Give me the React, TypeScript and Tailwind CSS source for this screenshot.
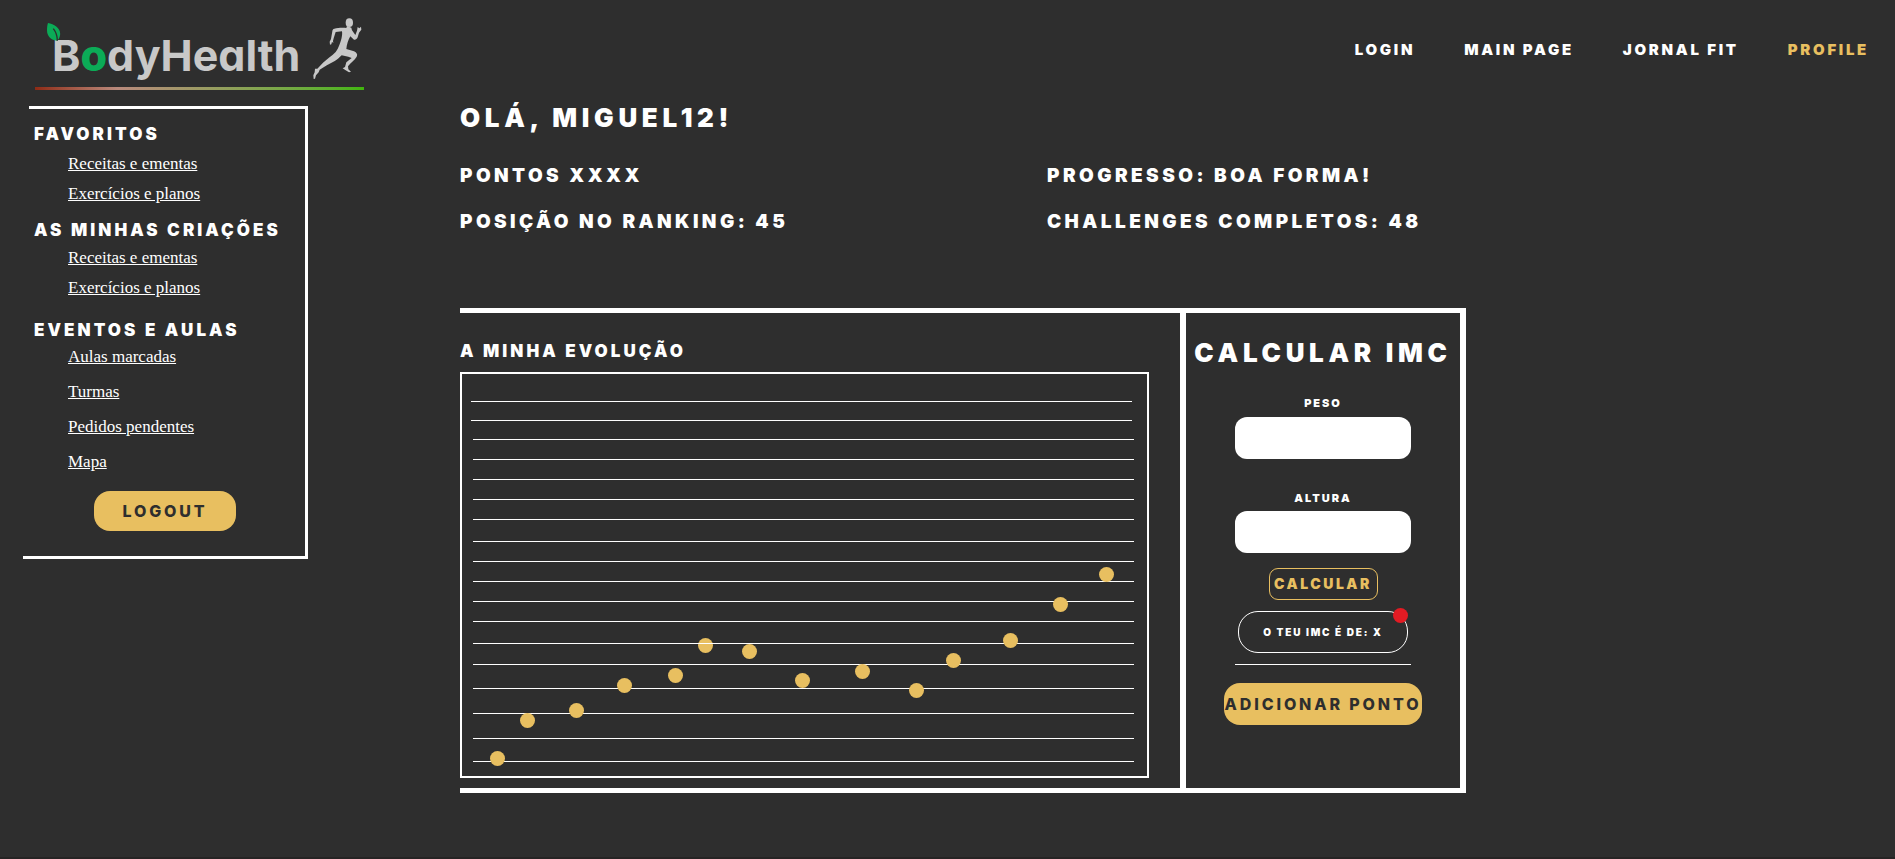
import React from "react";

const navLinks = [
  { label: "LOGIN", active: false },
  { label: "MAIN PAGE", active: false },
  { label: "JORNAL FIT", active: false },
  { label: "PROFILE", active: true },
];

const gridLines = [29, 48, 67, 87, 107, 127, 147, 169, 189, 209, 229, 249, 271, 292, 316, 341, 366, 389];

const points = [
  [37.5, 386.5],
  [67.5, 348.5],
  [116.5, 338.5],
  [164.5, 313.5],
  [215.5, 303.5],
  [245.5, 273.5],
  [289.5, 279.5],
  [342.5, 308.5],
  [402.5, 299.5],
  [456.5, 318.5],
  [493.5, 288.5],
  [550.5, 268.5],
  [600.5, 232.5],
  [646.5, 202.5],
];

function Logo() {
  return (
    <a href="#" aria-label="BodyHealth" className="relative block h-[106px] w-[364px] shrink-0 pl-[35px] pt-4">
      <svg className="absolute left-[46px] top-[22px]" width="15" height="20" viewBox="0 0 45 60" aria-hidden="true">
        <path d="M6 3C25 6 46 20 42 40C41 48 37 54 33 56C15 55 3 43 3 25C3 16 4 8 6 3Z" fill="#0bab57" />
        <path d="M22 20C29 29 34 40 34 56" stroke="#2e2e2e" strokeWidth="4" fill="none" />
      </svg>
      <span className="flex h-[71px] items-start justify-between pr-0.5">
        <span className="block pl-[17px] pt-[13px] text-[43px] font-bold leading-[52px] text-[#c8c8c8] [font-feature-settings:'cv11']">
          B<span className="font-extrabold text-[#0bab57]">o</span>dyHealth
        </span>
        <svg className="shrink-0" width="50" height="64" viewBox="0 0 150 190" fill="#c8c8c8" aria-hidden="true">
          <ellipse cx="112" cy="19" rx="11" ry="13" />
          <path d="M105 29L103 35C94 34 78 34 67 37C63 38 61 41 61 45L57 68L53 76L54 85L58 84L60 76L64 81L63 74L65 66L71 47L90 45C92 57 87 75 82 86C79 95 75 102 71 107C59 119 44 129 33 139L16 157L9 157L8 168L4 177L5 188L9 187L12 177L20 168L23 160C37 152 52 142 67 135C75 131 83 123 89 117L109 121L119 125L103 138L99 152L92 156L101 162L111 168L117 166L109 159L108 150C116 139 128 131 134 121C138 115 134 109 126 105L103 98C104 86 109 70 115 60L126 70C130 72 135 68 137 63L141 49L148 40L147 31L142 36L137 32L135 43L130 56L120 42L118 34Z" />
        </svg>
      </span>
      <span className="block h-[3px] bg-linear-to-r from-[#8e2a14] via-[#b98a7c] via-25% to-[#3fb50a]" />
    </a>
  );
}

function SideSection({ title, links, className, listClass }: { title: string; links: string[]; className: string; listClass: string }) {
  return (
    <section className={className}>
      <h2 className="whitespace-nowrap text-[17px] font-black leading-6 tracking-[0.18em]">{title}</h2>
      <ul className={listClass}>
        {links.map((l) => (
          <li key={l}>
            <a href="#" className="underline">
              {l}
            </a>
          </li>
        ))}
      </ul>
    </section>
  );
}

function Sidebar() {
  return (
    <aside className="ml-[23px] w-[285px] shrink-0 self-start border-b-[3px] border-r-[3px] border-white">
      <div className="ml-1.5 h-[3px] bg-white" />
      <div className="flex flex-col pl-[11px] pt-[13px]">
        <SideSection
          title="FAVORITOS"
          links={["Receitas e ementas", "Exercícios e planos"]}
          className=""
          listClass="mt-1.5 flex flex-col gap-1.5 pl-[34px] font-['Liberation_Serif',serif] text-[17px] leading-6"
        />
        <SideSection
          title="AS MINHAS CRIAÇÕES"
          links={["Receitas e ementas", "Exercícios e planos"]}
          className="mt-3"
          listClass="mt-1 flex flex-col gap-1.5 pl-[34px] font-['Liberation_Serif',serif] text-[17px] leading-6"
        />
        <SideSection
          title="EVENTOS E AULAS"
          links={["Aulas marcadas", "Turmas", "Pedidos pendentes", "Mapa"]}
          className="mt-[18px]"
          listClass="mt-[3px] flex flex-col gap-[11px] pl-[34px] font-['Liberation_Serif',serif] text-[17px] leading-6"
        />
        <button
          type="button"
          className="mb-[25px] ml-[60px] mt-[17px] h-10 w-[142px] rounded-2xl bg-[#e8bf60] text-base font-extrabold tracking-[0.18em] text-[#2e2e2e]"
        >
          LOGOUT
        </button>
      </div>
    </aside>
  );
}

function Chart() {
  return (
    <svg viewBox="0 0 689 406" className="block h-auto w-full" role="img" aria-label="A minha evolução">
      <rect x="1" y="1" width="687" height="404" fill="none" stroke="#fff" strokeWidth="2" />
      {gridLines.map((y, i) => (
        <rect key={y} x={i < 2 ? 11 : 13} y={y} width="661" height="1" fill="#fff" />
      ))}
      {points.map(([x, y]) => (
        <circle key={x} cx={x} cy={y} r="7.5" fill="#e8bf60" />
      ))}
      <rect x="237" y="271" width="17" height="1" fill="#fff" />
    </svg>
  );
}

function ImcForm() {
  return (
    <form className="flex w-[286px] shrink-0 flex-col items-center border-x-[6px] border-white" onSubmit={(e) => e.preventDefault()}>
      <h2 className="mt-6 whitespace-nowrap text-[26px] font-black leading-8 tracking-[0.18em]">CALCULAR IMC</h2>
      <label htmlFor="peso" className="mt-[26px] text-[11px] font-black leading-4 tracking-[0.18em]">
        PESO
      </label>
      <input id="peso" type="text" className="mt-1.5 h-[42px] w-44 rounded-xl bg-white px-3 text-base text-[#2e2e2e]" />
      <label htmlFor="altura" className="mt-[31px] text-[11px] font-black leading-4 tracking-[0.18em]">
        ALTURA
      </label>
      <input id="altura" type="text" className="mt-[5px] h-[42px] w-44 rounded-xl bg-white px-3 text-base text-[#2e2e2e]" />
      <button
        type="submit"
        className="mt-[15px] h-8 w-[109px] rounded-[9px] border border-[#e8bf60] text-sm font-black tracking-[0.18em] text-[#e8bf60]"
      >
        CALCULAR
      </button>
      <div className="relative mt-[11px] flex h-[42px] w-[170px] items-center justify-center rounded-[20px] border border-white">
        <output htmlFor="peso altura" className="whitespace-nowrap text-[10px] font-black tracking-[0.18em]">
          O TEU IMC É DE: X
        </output>
        <span className="absolute -right-px -top-1 size-[15px] rounded-full bg-[#e31b23]" />
      </div>
      <hr className="mt-[11px] w-44 border-t border-white" />
      <button
        type="button"
        className="mt-[18px] h-[42px] w-[198px] whitespace-nowrap rounded-2xl bg-[#e8bf60] text-base font-extrabold tracking-[0.18em] text-[#2e2e2e]"
      >
        ADICIONAR PONTO
      </button>
    </form>
  );
}

export default function App() {
  return (
    <div className="flex min-h-screen flex-col border-b-2 border-[#262424] bg-[#2e2e2e] font-['Inter',sans-serif] text-white">
      <header className="flex items-start justify-between">
        <Logo />
        <nav className="flex gap-[49px] pr-[26px] pt-[38px]">
          {navLinks.map((l) => (
            <a
              key={l.label}
              href="#"
              className={
                l.active
                  ? "whitespace-nowrap text-[15px] font-black leading-6 tracking-[0.18em] text-[#e8bf60]"
                  : "whitespace-nowrap text-[15px] font-black leading-6 tracking-[0.18em]"
              }
            >
              {l.label}
            </a>
          ))}
        </nav>
      </header>

      <div className="flex gap-[152px]">
        <Sidebar />
        <main className="min-w-0 max-w-[1006px] flex-1 pb-16">
          <h1 className="-mt-1 text-[26px] font-black leading-8 tracking-[0.18em]">OLÁ, MIGUEL12!</h1>
          <div className="mt-[30px] grid grid-cols-[587px_1fr] gap-y-[22px] whitespace-nowrap text-[19px] font-black leading-6 tracking-[0.18em]">
            <p>PONTOS XXXX</p>
            <p>PROGRESSO: BOA FORMA!</p>
            <p>POSIÇÃO NO RANKING: 45</p>
            <p>CHALLENGES COMPLETOS: 48</p>
          </div>
          <div className="mt-[74px] flex border-y-[5px] border-white">
            <section className="min-w-0 flex-1 pb-2.5 pr-[31px] pt-[26px]">
              <h2 className="mb-[9px] text-[17px] font-black leading-6 tracking-[0.18em]">A MINHA EVOLUÇÃO</h2>
              <Chart />
            </section>
            <ImcForm />
          </div>
        </main>
      </div>
    </div>
  );
}
